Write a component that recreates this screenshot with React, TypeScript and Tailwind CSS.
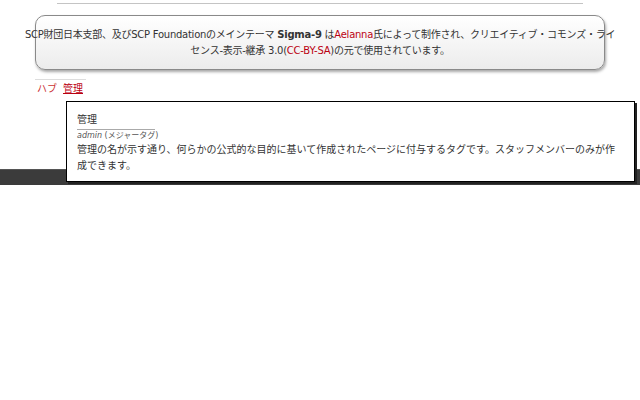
export default function App() {
  return (
    <div
      className="relative min-h-[400px] w-[640px] bg-white text-[#333] text-[10px] leading-4"
      style={{ fontFamily: '"DejaVu Sans", "Noto Sans CJK JP", sans-serif' }}
    >
      <div className="pt-[3px] px-[35px]">
        <div className="mx-[22px] border-t border-[#c4c4c4]" />

        <div className="mt-[11px] h-[55px] rounded-[10px] border border-[#8a8a8a] bg-gradient-to-b from-white to-[#ececec] shadow-[1px_2px_3px_rgba(0,0,0,0.35)] flex flex-col items-center justify-center text-center whitespace-nowrap tracking-[-0.25px]">
          <p>
            SCP財団日本支部、及びSCP Foundationのメインテーマ <b>Sigma-9</b> は
            <a className="text-[#b01]">Aelanna</a>氏によって制作され、クリエイティブ・コモンズ・ライ
          </p>
          <p>
            センス-表示-継承 3.0(<a className="text-[#b01]">CC-BY-SA</a>)の元で使用されています。
          </p>
        </div>

        <div className="mt-[9px] flex">
          <div className="border-t border-[#ddd] pt-[1px] pl-[2px] pr-[3px] flex gap-[6px]">
            <a className="text-[#c33]">ハブ</a>
            <a className="text-[#b01] underline">管理</a>
          </div>
        </div>
      </div>

      <div className="mt-[72px] h-4 bg-[#3b3b3b] border-t border-[#555]" />

      <div className="absolute left-[66px] top-[101px] w-[569px] h-[81px] bg-white border border-black shadow-[2px_2px_0_#222] px-[10px] pt-[10px]">
        <div className="inline-block border-b border-[#aaa] pr-[58px] pb-[1px]">管理</div>
        <div className="text-[8px] leading-3 text-[#555]">
          <i>admin</i> (メジャータグ)
        </div>
        <p className="leading-4">
          管理の名が示す通り、何らかの公式的な目的に基いて作成されたページに付与するタグです。スタッフメンバーのみが作成できます。
        </p>
      </div>
    </div>
  );
}
